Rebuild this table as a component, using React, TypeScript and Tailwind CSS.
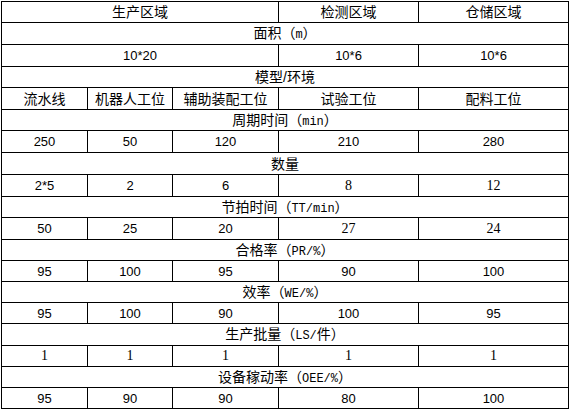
import React from "react";

type Cell = { t: React.ReactNode; span?: number; serif?: boolean };

const M = ({ children }: { children: React.ReactNode }) => (
  <span className="font-['Liberation_Mono',monospace] text-[12px]">{children}</span>
);

const rows: Cell[][] = [
  [{ t: "生产区域", span: 3 }, { t: "检测区域" }, { t: "仓储区域" }],
  [{ t: <>面积（<M>m</M>）</>, span: 5 }],
  [{ t: "10*20", span: 3 }, { t: "10*6" }, { t: "10*6" }],
  [{ t: "模型/环境", span: 5 }],
  [{ t: "流水线" }, { t: "机器人工位" }, { t: "辅助装配工位" }, { t: "试验工位" }, { t: "配料工位" }],
  [{ t: <>周期时间（<M>min</M>）</>, span: 5 }],
  [{ t: "250" }, { t: "50" }, { t: "120" }, { t: "210" }, { t: "280" }],
  [{ t: "数量", span: 5 }],
  [{ t: "2*5" }, { t: "2" }, { t: "6" }, { t: "8", serif: true }, { t: "12", serif: true }],
  [{ t: <>节拍时间（<M>TT/min</M>）</>, span: 5 }],
  [{ t: "50" }, { t: "25" }, { t: "20" }, { t: "27", serif: true }, { t: "24", serif: true }],
  [{ t: <>合格率（<M>PR/%</M>）</>, span: 5 }],
  [{ t: "95" }, { t: "100" }, { t: "95" }, { t: "90" }, { t: "100" }],
  [{ t: <>效率（<M>WE/%</M>）</>, span: 5 }],
  [{ t: "95" }, { t: "100" }, { t: "90" }, { t: "100" }, { t: "95" }],
  [{ t: <>生产批量（<M>LS/</M>件）</>, span: 5 }],
  [{ t: "1", serif: true }, { t: "1", serif: true }, { t: "1", serif: true }, { t: "1", serif: true }, { t: "1", serif: true }],
  [{ t: <>设备稼动率（<M>OEE/%</M>）</>, span: 5 }],
  [{ t: "95" }, { t: "90" }, { t: "90" }, { t: "80" }, { t: "100" }],
];

const spanClass: Record<number, string> = {
  1: "col-span-1",
  3: "col-span-3",
  5: "col-span-5",
};

export default function App() {
  return (
    <div className="w-[572px] h-[412px] bg-white pt-px pl-px">
      <div className="grid w-[568px] grid-cols-[85px_84px_105px_139px_149px] grid-rows-[20px_21px_21px_20px_21px_20px_21px_21px_21px_20px_21px_20px_20px_20px_20px_21px_20px_20px_20px] gap-px bg-black p-px font-['Liberation_Sans','Noto_Sans_CJK_SC',sans-serif] text-[13px] leading-none text-black">
        {rows.flatMap((r, i) =>
          r.map((c, j) => (
            <div
              key={`${i}-${j}`}
              className={`${spanClass[c.span ?? 1]} flex items-center justify-center bg-white ${
                c.serif ? "font-['Liberation_Serif','Noto_Sans_CJK_SC',serif] text-[14px]" : ""
              } ${typeof c.t === "string" && /[\u4e00-\u9fff]/.test(c.t) ? "text-[14px]" : ""} ${
                typeof c.t !== "string" ? "text-[14px]" : ""
              }`}
            >
              <span>{c.t}</span>
            </div>
          ))
        )}
      </div>
    </div>
  );
}
